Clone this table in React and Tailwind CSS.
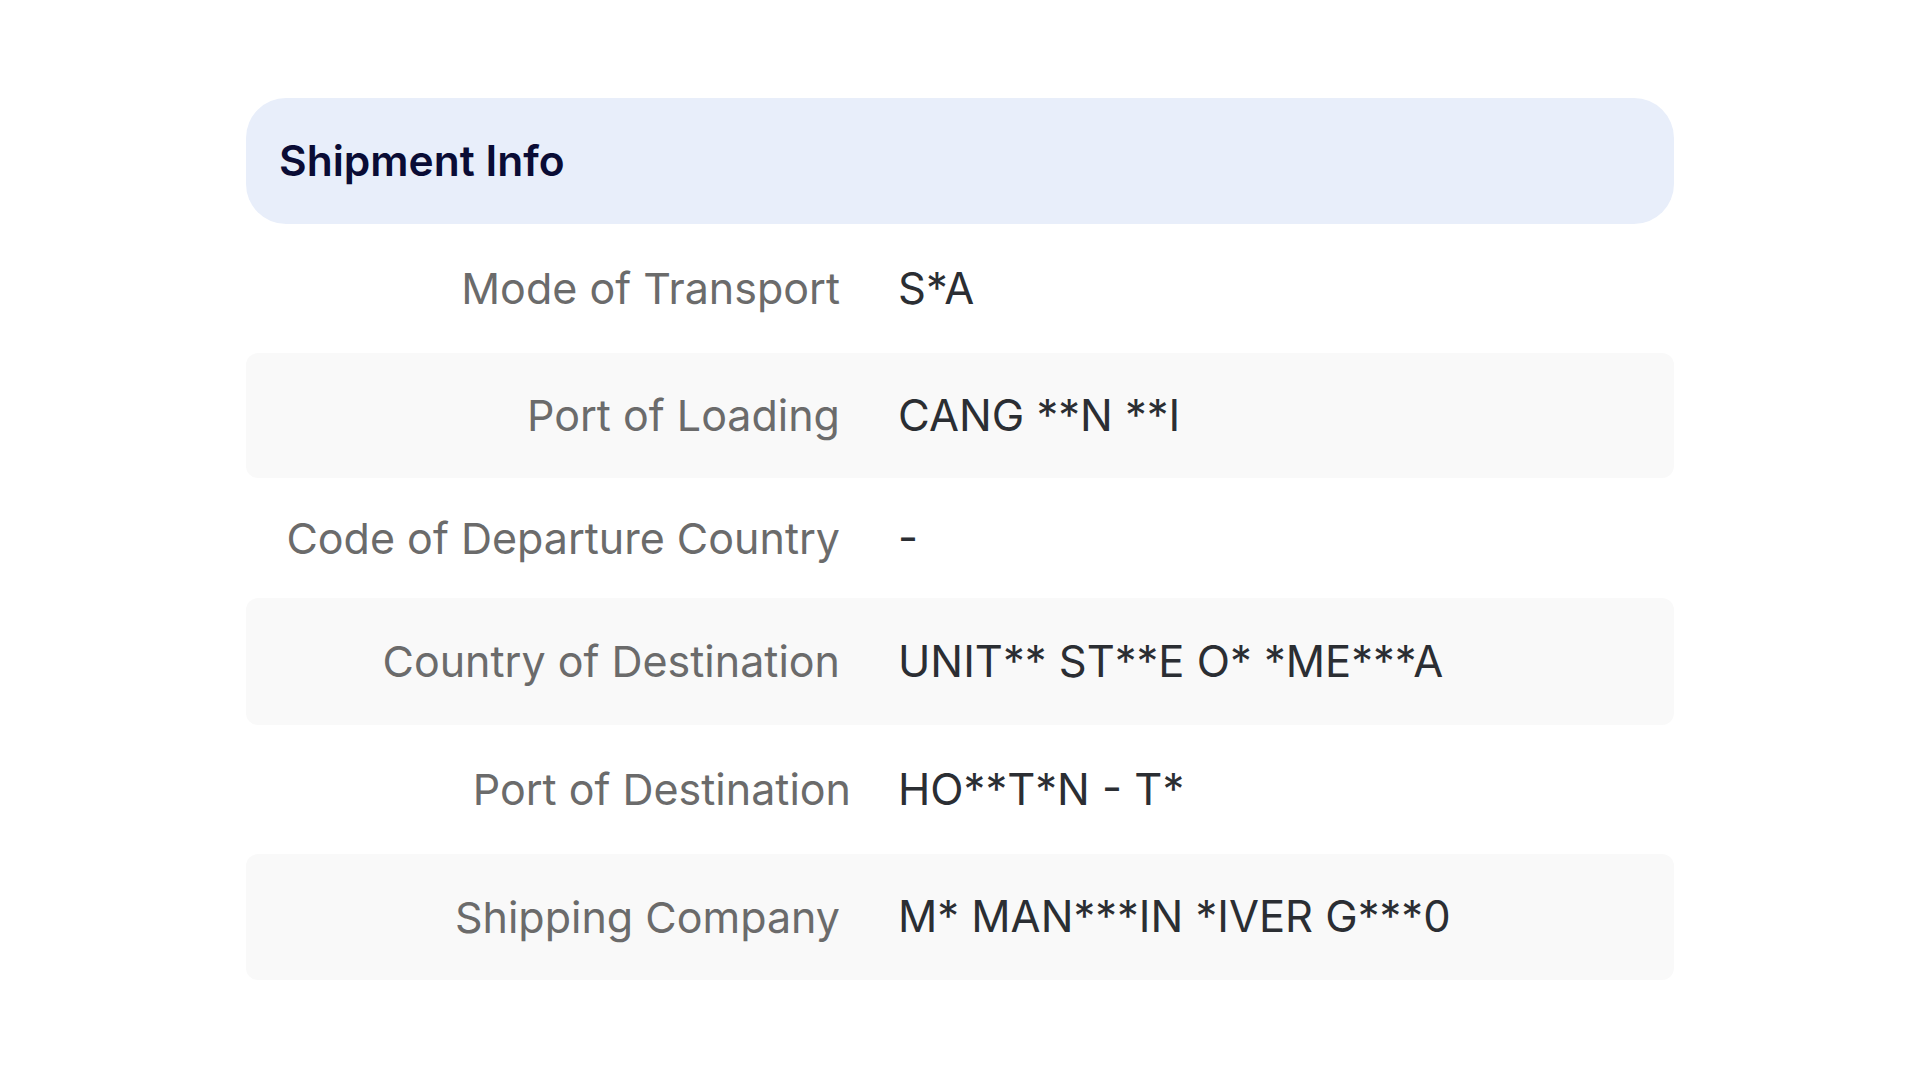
import React from "react";

const rows = [
  { label: "Mode of Transport", value: "S*A", h: "h-[129px]", bg: false, lw: "w-[594px]", vp: "pl-[58px]" },
  { label: "Port of Loading", value: "CANG **N **I", h: "h-[125px]", bg: true, lw: "w-[594px]", vp: "pl-[58px]" },
  { label: "Code of Departure Country", value: "-", h: "h-[120px]", bg: false, lw: "w-[594px]", vp: "pl-[58px]" },
  { label: "Country of Destination", value: "UNIT** ST**E O* *ME***A", h: "h-[127px]", bg: true, lw: "w-[594px]", vp: "pl-[58px]" },
  { label: "Port of Destination", value: "HO**T*N - T*", h: "h-[129px]", bg: false, lw: "w-[605px]", vp: "pl-[47px]" },
  { label: "Shipping Company", value: "M* MAN***IN *IVER G***0", h: "h-[126px]", bg: true, lw: "w-[594px]", vp: "pl-[58px]" },
];

export default function App() {
  return (
    <div className="min-h-screen w-full bg-white font-['Inter',sans-serif]">
      <div className="pt-[98px] pl-[246px]">
        <div className="w-[1428px] flex flex-col">
          <div className="h-[126px] rounded-[40px] bg-[#e8eefa] flex items-center pl-[33px]">
            <h2 className="text-[42.5px] font-semibold text-[#0a0c35] leading-none">Shipment Info</h2>
          </div>
          {rows.map((r) => (
            <div
              key={r.label}
              className={`${r.h} flex items-center rounded-xl ${r.bg ? "bg-[#f9f9f9]" : ""}`}
            >
              <div className={`${r.lw} shrink-0 text-right text-[43px] text-[#6b6b6b] leading-none whitespace-nowrap`}>
                {r.label}
              </div>
              <div className={`${r.vp} text-[43.5px] text-[#2b2e33] leading-none whitespace-nowrap`}>
                {r.value}
              </div>
            </div>
          ))}
        </div>
      </div>
    </div>
  );
}
